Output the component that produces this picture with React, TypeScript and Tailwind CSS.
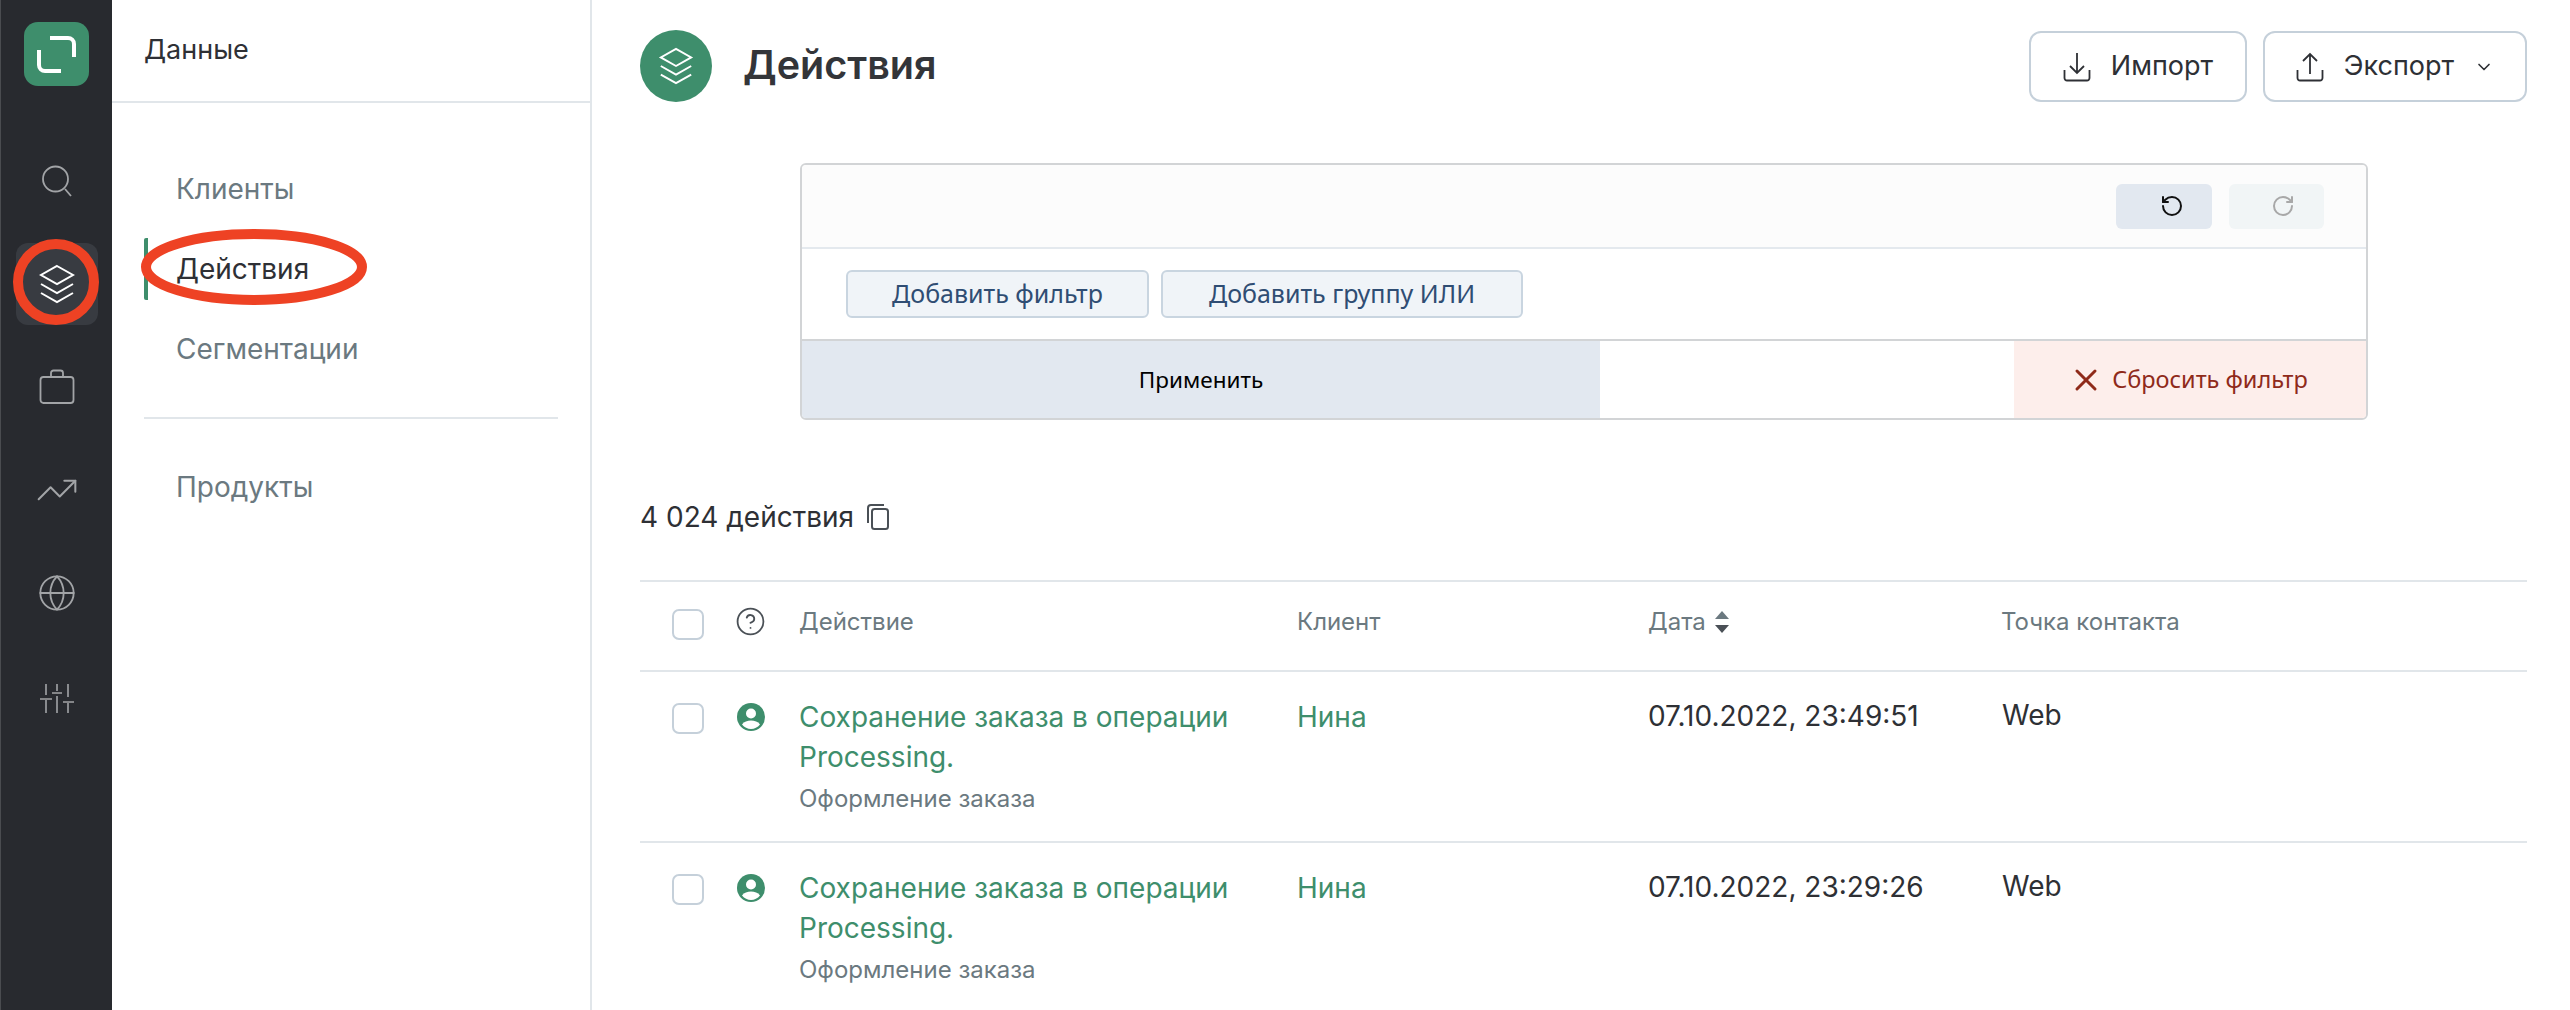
import React from "react";
import { Globe, TrendingUp, RotateCcw, RotateCw, X, ChevronDown, CircleHelp } from "lucide-react";

const LayersIcon = ({ className }: { className?: string }) => (
  <svg viewBox="0 0 36 40" fill="none" stroke="currentColor" strokeWidth="2" className={className}>
    <path d="M18 2 L34 11 L18 20 L2 11 Z" />
    <path d="M2 20 L18 29 L34 20" />
    <path d="M2 29 L18 38 L34 29" />
  </svg>
);

const SearchIcon = () => (
  <svg viewBox="0 0 32 34" fill="none" stroke="#a2a4a7" strokeWidth="1.800" className="w-[32px] h-[34px]">
    <circle cx="14.500" cy="15" r="12.500" />
    <path d="M24 25l6 7" />
  </svg>
);

const BriefcaseIcon = () => (
  <svg viewBox="0 0 36 36" fill="none" stroke="#a2a4a7" strokeWidth="1.800" className="w-[36px] h-[36px]">
    <rect x="1.500" y="8" width="33" height="26" rx="3" />
    <path d="M12 8V4a2.500 2.500 0 0 1 2.500-2.500h7A2.500 2.500 0 0 1 24 4v4" />
  </svg>
);

const SlidersIcon = () => (
  <svg viewBox="0 0 34 30" fill="none" stroke="#a2a4a7" strokeWidth="1.600" className="w-[34px] h-[30px]">
    <path d="M6 1v11M6 17v13M17 1v7M17 13v17M28 1v13M28 20v10" />
    <path d="M0 16h12M12 10h10M23 19h11" />
  </svg>
);

const CopyIcon = () => (
  <svg viewBox="0 0 24 26" fill="none" stroke="#4a5056" strokeWidth="2" className="w-[24px] h-[26px]">
    <rect x="6" y="5" width="16" height="20" rx="2.500" />
    <path d="M2 19V4a3 3 0 0 1 3-3h13" />
  </svg>
);

const PersonIcon = () => (
  <svg viewBox="0 0 28 28" className="w-[28px] h-[28px]">
    <circle cx="14" cy="14" r="14" fill="#3e8e6c" />
    <circle cx="14" cy="10.500" r="5" fill="#fff" />
    <path d="M5 21.500c2-3 5.500-4 9-4s7 1 9 4c-2.400 2.800-5.500 4.500-9 4.500s-6.600-1.700-9-4.500z" fill="#fff" />
  </svg>
);

const TrayIcon = ({ up }: { up?: boolean }) => (
  <svg viewBox="0 0 28 30" fill="none" stroke="#2e3035" strokeWidth="1.800" className="w-[28px] h-[30px]">
    <path d="M1.500 18v8a2.500 2.500 0 0 0 2.500 2.500h20a2.500 2.500 0 0 0 2.500-2.500v-8" />
    {up ? <path d="M14 22V2M7 9l7-7 7 7" /> : <path d="M14 1v20M7 14l7 7 7-7" />}
  </svg>
);

const SortIcon = () => (
  <svg viewBox="0 0 16 24" className="w-[16px] h-[24px]">
    <path d="M8 1l7 8H1z" fill="#6b7980" />
    <path d="M8 23l7-8H1z" fill="#4a5056" />
  </svg>
);

const Checkbox = () => (
  <span className="block w-[32px] h-[31px] shrink-0 rounded-[7px] border-2 border-[#c5d0da] bg-white" />
);

const rows = [
  { date: "07.10.2022, 23:49:51" },
  { date: "07.10.2022, 23:29:26" },
];

const App = () => {
  return (
    <div className="relative flex w-[2570px] h-[1010px] overflow-hidden bg-white text-[#2e3035] font-['Inter',sans-serif]">
      {/* rail */}
      <aside className="w-[112px] shrink-0 bg-[#282a2f] flex flex-col items-center pt-[22px] border-l border-[#4a4c50]">
        <div className="w-[65px] h-[64px] rounded-[14px] bg-[#3e8e6c]">
          <svg viewBox="0 0 65 64" fill="none" stroke="#fff" strokeWidth="4" className="w-[65px] h-[64px]">
            <path d="M26 16h18a6 6 0 0 1 6 6v13" />
            <path d="M15 28v15a6 6 0 0 0 6 6h16" />
          </svg>
        </div>
        <div className="mt-[43px] h-[103px] flex items-center"><SearchIcon /></div>
        <div className="h-[103px] flex items-center">
          <div className="w-[82px] h-[82px] rounded-[12px] bg-[#383b41] flex items-center justify-center">
            <LayersIcon className="w-[36px] h-[40px] text-white" />
          </div>
        </div>
        <div className="h-[103px] flex items-center"><BriefcaseIcon /></div>
        <div className="h-[103px] flex items-center"><TrendingUp size={44} strokeWidth={1.1} color="#a2a4a7" /></div>
        <div className="h-[104px] flex items-center"><Globe size={40} strokeWidth={1.1} color="#a2a4a7" /></div>
        <div className="h-[105px] flex items-center"><SlidersIcon /></div>
      </aside>

      {/* data menu */}
      <nav className="w-[480px] shrink-0 border-r-2 border-[#e1e6ea]">
        <div className="h-[103px] border-b-2 border-[#e1e6ea] pl-[32px] flex items-center text-[27px]">Данные</div>
        <ul className="pt-[46px] px-[32px] text-[28px] text-[#6b7980]">
          <li className="h-[80px] pl-[32px] flex items-center">Клиенты</li>
          <li className="h-[80px] pl-[28px] flex items-center text-[#2e3035]">
            <span className="border-l-4 border-[#3e8e6c] -ml-[28px] pl-[28px] h-[62px] flex items-center rounded-[2px]">Действия</span>
          </li>
          <li className="h-[80px] pl-[32px] flex items-center">Сегментации</li>
          <li className="mt-[28px] border-t-2 border-[#e1e6ea] pt-[43px] h-[95px] pl-[32px] flex items-center">Продукты</li>
        </ul>
      </nav>

      {/* main */}
      <main className="flex-1 pl-[48px] pr-[43px]">
        <header className="flex justify-between pt-[30px] h-[133px] items-start">
          <div className="flex items-center gap-[31px] h-[72px]">
            <span className="w-[72px] h-[72px] rounded-full bg-[#3e8e6c] flex items-center justify-center">
              <LayersIcon className="w-[36px] h-[38px] text-white" />
            </span>
            <h1 className="text-[39.500px] font-semibold text-[#333539]">Действия</h1>
          </div>
          <div className="flex gap-[16px] pt-[1px]">
            <button className="w-[218px] h-[71px] rounded-[12px] border-2 border-[#c5d0da] flex items-center justify-center gap-[20px] text-[27px]">
              <TrayIcon />Импорт
            </button>
            <button className="w-[264px] h-[71px] rounded-[12px] border-2 border-[#c5d0da] flex items-center justify-center gap-[20px] text-[27px]">
              <TrayIcon up />Экспорт<ChevronDown size={20} strokeWidth={2} />
            </button>
          </div>
        </header>

        {/* filter */}
        <section className="ml-[160px] mt-[30px] w-[1568px] h-[257px] rounded-[6px] border-2 border-[#d2d4d6] overflow-hidden font-['Noto_Sans',sans-serif]">
          <div className="h-[84px] bg-[#fcfcfc] border-b-2 border-[#e4e9ee] flex items-center justify-end gap-[17px] pr-[42px]">
            <span className="w-[96px] h-[45px] rounded-[6px] bg-[#e2e8f0] flex items-center justify-center pl-[16px]"><RotateCcw size={24} strokeWidth={2} color="#111" /></span>
            <span className="w-[95px] h-[45px] rounded-[6px] bg-[#f1f5f6] flex items-center justify-center pl-[12px]"><RotateCw size={24} strokeWidth={2} color="#a8a8a8" /></span>
          </div>
          <div className="h-[90px] bg-white flex items-center gap-[12px] pl-[44px]">
            <button className="w-[303px] h-[48px] rounded-[6px] border-2 border-[#c9d5e0] bg-[#f0f4f8] text-[25px] text-[#2f4d73]">Добавить фильтр</button>
            <button className="w-[362px] h-[48px] rounded-[6px] border-2 border-[#c9d5e0] bg-[#f0f4f8] text-[25px] text-[#2f4d73]">Добавить группу ИЛИ</button>
          </div>
          <div className="h-[79px] flex border-t-2 border-[#d2d4d6]">
            <button className="w-[798px] bg-[#e2e8f0] text-[22.500px] text-black">Применить</button>
            <div className="flex-1 bg-white" />
            <button className="w-[352px] bg-[#fdeeeb] text-[23.500px] text-[#8f2a1a] flex items-center justify-center gap-[8px] pr-[4px]">
              <X size={36} strokeWidth={2} />Сбросить фильтр
            </button>
          </div>
        </section>

        {/* count */}
        <div className="mt-[77px] flex items-center gap-[12px] h-[40px] text-[28px]">
          4 024 действия <CopyIcon />
        </div>

        {/* table */}
        <div className="mt-[43px] border-t-2 border-[#e1e6ea]">
          <div className="grid grid-cols-[159px_498px_351px_353px_1fr] h-[90px] items-center border-b-2 border-[#e1e6ea] text-[24px] text-[#6b7980]">
            <div className="flex items-center pl-[32px] gap-[31px] pb-[3px]">
              <Checkbox />
              <span className="mb-[6px]"><CircleHelp size={31} strokeWidth={1.4} color="#4a5056" /></span>
            </div>
            <div className="pb-[8px]">Действие</div>
            <div className="pb-[8px]">Клиент</div>
            <div className="flex items-center gap-[8px] pb-[8px]">Дата <SortIcon /></div>
            <div className="pb-[8px]">Точка контакта</div>
          </div>
          {rows.map((row) => (
            <div key={row.date} className="grid grid-cols-[159px_498px_351px_353px_1fr] h-[171px] pt-[25px] border-b-2 border-[#e1e6ea] text-[28px] leading-[40px]">
              <div className="flex items-start pl-[32px] gap-[33px] pt-[6px]">
                <Checkbox />
                <PersonIcon />
              </div>
              <div>
                <div className="text-[#3e8e6c] w-[460px]">Сохранение заказа в операции Processing.</div>
                <div className="mt-[6px] text-[24px] leading-[32px] text-[#6b7980]">Оформление заказа</div>
              </div>
              <div className="text-[#3e8e6c]">Нина</div>
              <div className="-mt-[1px]">{row.date}</div>
              <div className="pl-[1px] -mt-[2px]">Web</div>
            </div>
          ))}
        </div>
      </main>

      {/* red annotations */}
      <svg viewBox="0 0 400 400" fill="none" stroke="#ee4224" strokeWidth="10" className="absolute left-0 top-[200px] w-[400px] h-[400px] pointer-events-none">
        <circle cx="56" cy="82" r="38" />
        <ellipse cx="254" cy="67" rx="108" ry="33" />
      </svg>
    </div>
  );
};

export default App;
